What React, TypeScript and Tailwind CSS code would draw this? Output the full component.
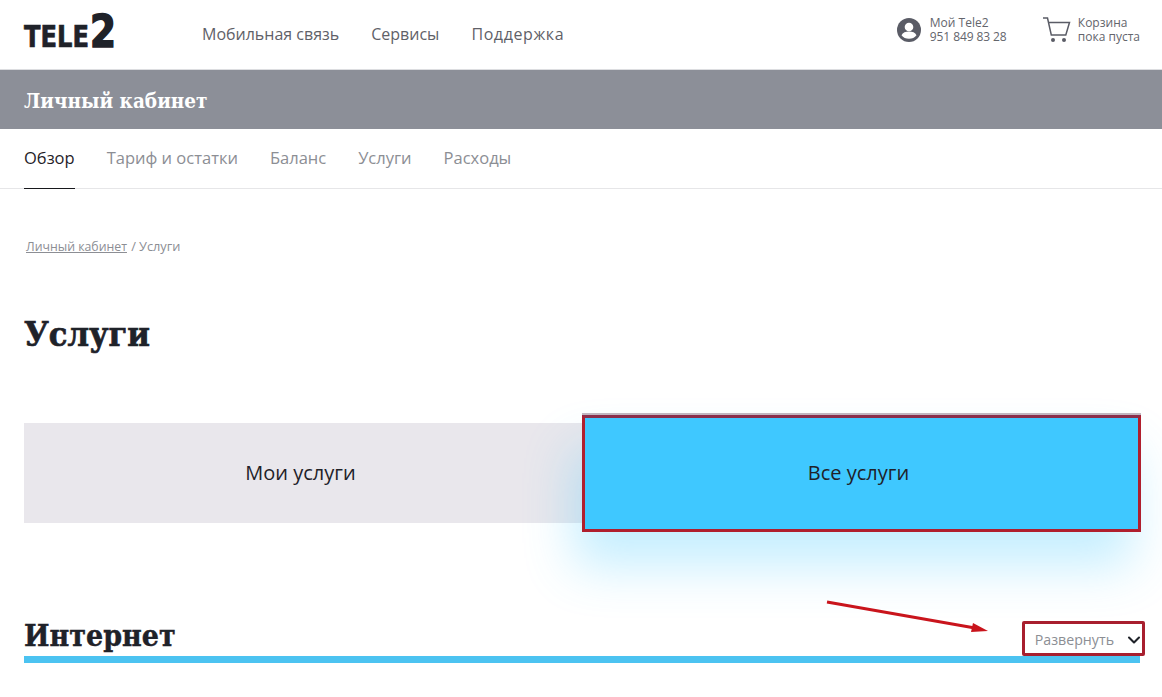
import { ChevronDown } from 'lucide-react';

const sans = 'font-["Open_Sans","Noto_Sans",sans-serif]';
const slab = 'font-["DejaVu_Serif_Condensed","DejaVu_Serif",serif]';

function Logo() {
  return (
    <svg width="92" height="36" viewBox="0 0 92 36" className="shrink-0 overflow-visible" fontFamily="'DejaVu Sans Condensed', sans-serif" fontWeight="700" fill="#1f2229">
      <text x="0" y="33" fontSize="30" textLength="65" lengthAdjust="spacingAndGlyphs" stroke="#1f2229" strokeWidth="0.6">TELE</text>
      <text x="66" y="33" fontSize="44" textLength="26" lengthAdjust="spacingAndGlyphs" stroke="#1f2229" strokeWidth="1.5">2</text>
    </svg>
  );
}

function UserIcon() {
  return (
    <svg width="24" height="24" viewBox="0 0 24 24" className="shrink-0">
      <circle cx="12" cy="12" r="12" fill="#5a5c66" />
      <circle cx="12" cy="9" r="4.300" fill="#fff" />
      <path d="M4.500 17.200c1.200-2.600 4.200-3.600 7.500-3.600s6.300 1 7.500 3.600c-1.700 2.300-4.400 3.600-7.500 3.600s-5.800-1.300-7.500-3.600z" fill="#fff" />
    </svg>
  );
}

function CartIcon() {
  return (
    <svg width="29" height="26" viewBox="0 0 29 26" fill="none" className="shrink-0">
      <path d="M1 1h4.500l3.800 17h14.500l3.700-12.500H6.500" stroke="#5a5c66" strokeWidth="1.500" />
      <circle cx="11" cy="23" r="2" fill="#5a5c66" />
      <circle cx="22" cy="23" r="2" fill="#5a5c66" />
    </svg>
  );
}

export default function App() {
  const tabs = ['Тариф и остатки', 'Баланс', 'Услуги', 'Расходы'];

  return (
    <div className={`relative h-[697px] w-[1162px] overflow-hidden bg-white ${sans}`}>
      <header className="flex h-[70px] items-center border-b border-[#dcdde0] pl-6 pr-[22px]">
        <div className="w-[178px] pb-[6px]">
          <Logo />
        </div>
        <nav className="flex gap-8 pb-[2px] text-[16px] text-[#5f6168]">
          <span>Мобильная связь</span>
          <span>Сервисы</span>
          <span className="tracking-[0.6px]">Поддержка</span>
        </nav>
        <div className="ml-auto flex items-center gap-2 pb-[10px] text-[12px] leading-[14px] text-[#63656c]">
          <UserIcon />
          <div className="w-[105px] pl-[1px]">
            <p>Мой Tele2</p>
            <p className="tracking-[-0.1px]">951 849 83 28</p>
          </div>
          <CartIcon />
          <div className="ml-[-1px]">
            <p>Корзина</p>
            <p>пока пуста</p>
          </div>
        </div>
      </header>

      <div className="flex h-[59px] items-center bg-[#8c8f98] pl-6 pt-[3px]">
        <h2 className={`${slab} text-[20.500px] font-bold text-white`}>Личный кабинет</h2>
      </div>

      <div className="flex h-[60px] gap-8 border-b border-[#e6e6e8] pl-6 text-[16.500px] text-[#8c8e94]">
        <span className="flex h-[60px] items-center border-b border-[#17181c] text-[#1f2229]">Обзор</span>
        {tabs.map(tab => (
          <span key={tab} className="flex items-center">{tab}</span>
        ))}
      </div>

      <div className="h-[67px] pl-[26px] pt-[48px] text-[12.800px] leading-[18px] text-[#8c8e94]">
        <span className="text-[12.300px] underline">Личный кабинет</span> <span className="ml-[1px]">/</span><span className="ml-[3px]">Услуги</span>
      </div>

      <h1 className={`${slab} mt-[52px] pl-6 text-[34px] font-bold leading-[52px] text-[#1f2229] [-webkit-text-stroke:0.7px_#1f2229]`}>Услуги</h1>

      <div className="ml-6 mr-[22px] mt-[63px] flex h-[100px] items-center text-[20px] text-[#1f2229]">
        <div className="flex h-[100px] flex-1 items-center justify-center bg-[#e9e7ec] pr-[5px]">Мои услуги</div>
        <div className="flex h-[116px] flex-1 items-center justify-center bg-[#3fc8ff] pr-[5px] shadow-[-8px_35px_50px_0_rgba(63,200,255,0.3)]">Все услуги</div>
      </div>

      <div className="ml-6 mr-[22px] mt-[93px] flex h-[47px] items-center justify-between border-b-[7px] border-[#4cc3f1]">
        <h2 className={`${slab} text-[30px] font-bold leading-[40px] text-[#1f2229] [-webkit-text-stroke:0.4px_#1f2229]`}>Интернет</h2>
        <div className="mr-[-4px] flex items-center gap-[10px] pt-[8px] text-[14.200px] text-[#8c8e94]">
          Развернуть
          <ChevronDown size={20} strokeWidth={2.500} className="text-[#1f2229]" />
        </div>
      </div>

      {/* red annotation marks on top of the screenshot */}
      <div className="absolute left-[582px] top-[415px] h-[117px] w-[559px] border-[3px] border-[#b01f2e] border-t-[#8a2f4c] shadow-[0_-2px_0_#c2b6c0]" />
      <div className="absolute left-[1022px] top-[621px] h-[35px] w-[123px] rounded-[2px] border-[3px] border-[#a81f2e]" />
      <svg className="absolute left-[820px] top-[595px]" width="180" height="45" viewBox="0 0 180 45" fill="none">
        <path d="M7 7L155 33" stroke="#c9141c" strokeWidth="3" />
        <path d="M168 36L153 28l-2 9z" fill="#c9141c" />
      </svg>
    </div>
  );
}
